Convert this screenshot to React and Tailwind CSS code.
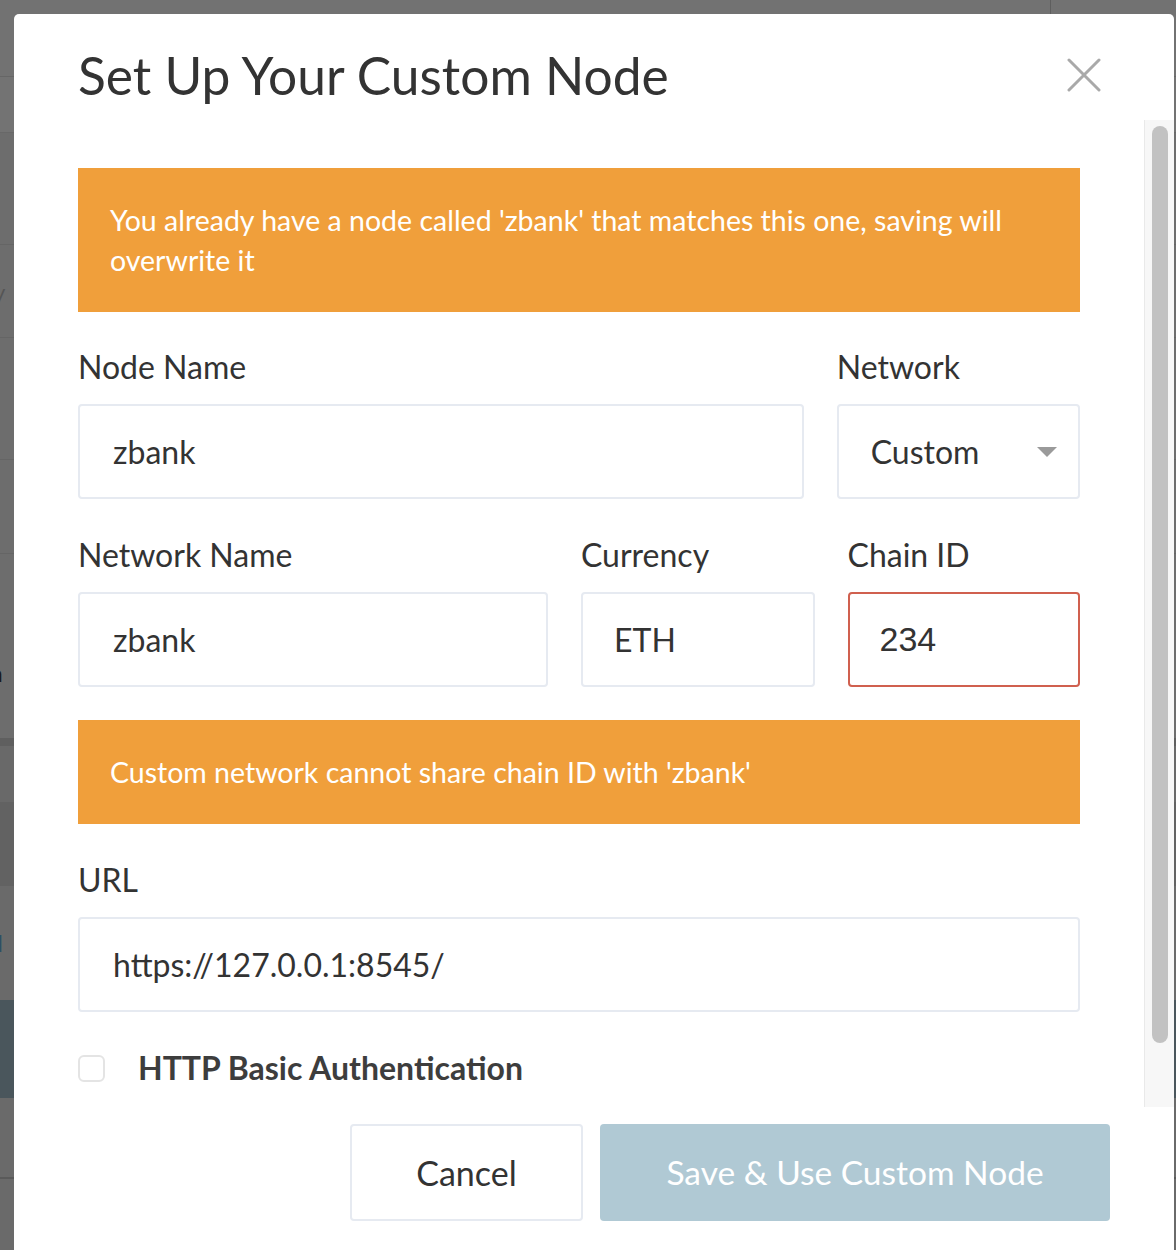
import React from "react";

function Label({ children }) {
  return <div className="text-[32px] leading-[36px] text-[#333] mb-[19px]">{children}</div>;
}

function Field({ value, mono = false, red = false, pad = "pl-[33px]" }) {
  return (
    <div
      className={`h-[95px] rounded-[4px] border-2 ${red ? "border-[#d0604f]" : "border-[#e6eaf1]"} bg-white flex items-center ${pad}`}
    >
      {mono ? (
        <span className="text-[34px] text-[#333] font-['Liberation_Sans',sans-serif]">{value}</span>
      ) : (
        <span className="text-[32px] text-[#333]">{value}</span>
      )}
    </div>
  );
}

function Alert({ children }) {
  return (
    <div className="bg-[#f09f3b] text-white text-[28.5px] leading-[40px] px-[32px] py-[32px]">{children}</div>
  );
}

export default function App() {
  return (
    <div className="relative w-[1176px] h-[1250px] overflow-hidden bg-[#6e6e6e] font-['Lato',sans-serif]">
      {/* dimmed background page */}
      <div className="flex flex-col w-full">
        <div className="h-[77px] bg-[#727272] border-b border-[#666] flex">
          <div className="w-[1050px]" />
          <div className="w-[1px] h-[14px] bg-[#5e5e5e]" />
        </div>
        <div className="h-[56px] bg-[#737373] border-b border-[#686868]" />
        <div className="h-[112px] bg-[#6d6d6d] border-b border-[#656565]" />
        <div className="h-[93px] bg-[#6d6d6d] border-b border-[#656565] flex items-center">
          <span className="text-[22px] text-[#555] -ml-[6px]">y</span>
        </div>
        <div className="h-[122px] bg-[#6d6d6d] border-b border-[#656565]" />
        <div className="h-[94px] bg-[#6d6d6d] border-b border-[#656565]" />
        <div className="h-[184px] bg-[#6d6d6d] flex items-end pb-[48px]">
          <span className="text-[22px] font-bold text-[#1a1a1a] -ml-[10px]">n</span>
        </div>
        <div className="h-[8px] bg-[#5f5f5f]" />
        <div className="h-[56px] bg-[#696969]" />
        <div className="h-[84px] bg-[#626262]" />
        <div className="h-[114px] bg-[#6a6a6a] flex items-center">
          <span className="text-[22px] font-bold text-[#2d4f63] -ml-[10px]">d</span>
        </div>
        <div className="h-[98px] bg-[#4a565c]" />
        <div className="h-[81px] bg-[#6a6a6a] border-b-2 border-[#5a5a5a]" />
        <div className="h-[80px] bg-[#6a6a6a]" />
      </div>

      {/* modal */}
      <div className="absolute left-[14px] top-[14px] right-[2px] bottom-[-40px] bg-white rounded-[5px] flex flex-col">
        <div className="h-[106px] shrink-0 flex items-start justify-between pl-[64px] pr-[73px] pt-[31px]">
          <h1 className="text-[51.5px] leading-[60px] text-[#333] font-normal">Set Up Your Custom Node</h1>
          <svg width="34" height="34" viewBox="0 0 34 34" className="mt-[13px]">
            <path d="M2 2 L32 32 M32 2 L2 32" stroke="#a9a9a9" strokeWidth="3" strokeLinecap="round" />
          </svg>
        </div>

        <div className="h-[987px] shrink-0 flex">
          <div className="flex-1 pl-[64px] pr-[64px] pt-[48px] overflow-hidden">
            <Alert>You already have a node called 'zbank' that matches this one, saving will overwrite it</Alert>

            <div className="grid grid-cols-[725fr_243fr] gap-x-[33px] mt-[37px]">
              <div>
                <Label>Node Name</Label>
                <Field value="zbank" />
              </div>
              <div>
                <Label>Network</Label>
                <div className="h-[95px] rounded-[4px] border-2 border-[#e6eaf1] bg-white flex items-center justify-between pl-[32px] pr-[21px]">
                  <span className="text-[32px] text-[#333]">Custom</span>
                  <svg width="20" height="10" viewBox="0 0 20 10">
                    <path d="M0 0 L20 0 L10 10 Z" fill="#9a9a9a" />
                  </svg>
                </div>
              </div>
            </div>

            <div className="grid grid-cols-[469fr_233fr_232fr] gap-x-[33px] mt-[38px]">
              <div>
                <Label>Network Name</Label>
                <Field value="zbank" />
              </div>
              <div>
                <Label>Currency</Label>
                <Field value="ETH" pad="pl-[31px]" />
              </div>
              <div>
                <Label>Chain ID</Label>
                <Field value="234" mono red pad="pl-[30px]" />
              </div>
            </div>

            <div className="mt-[33px]">
              <Alert>Custom network cannot share chain ID with 'zbank'</Alert>
            </div>

            <div className="mt-[38px]">
              <Label>URL</Label>
              <Field value="https://127.0.0.1:8545/" />
            </div>

            <div className="mt-[32px] flex items-center">
              <div className="w-[27px] h-[27px] rounded-[6px] border-2 border-[#e4e4e4] bg-white" />
              <span className="ml-[33px] text-[32px] font-bold text-[#3d3d3d]">HTTP Basic Authentication</span>
            </div>
          </div>

          <div className="w-[30px] shrink-0 bg-[#f7f7f7] border-l border-[#e9e9e9] pt-[6px] flex justify-center">
            <div className="w-[16px] h-[917px] rounded-full bg-[#c2c2c2]" />
          </div>
        </div>

        <div className="flex justify-end gap-[17px] pr-[64px] pt-[17px]">
          <button className="w-[233px] h-[97px] rounded-[4px] border-2 border-[#e6eaf1] bg-white text-[34px] text-[#333]">
            Cancel
          </button>
          <button className="w-[510px] h-[97px] rounded-[4px] bg-[#b0c9d4] text-[33.5px] text-white">
            Save &amp; Use Custom Node
          </button>
        </div>
      </div>
    </div>
  );
}
